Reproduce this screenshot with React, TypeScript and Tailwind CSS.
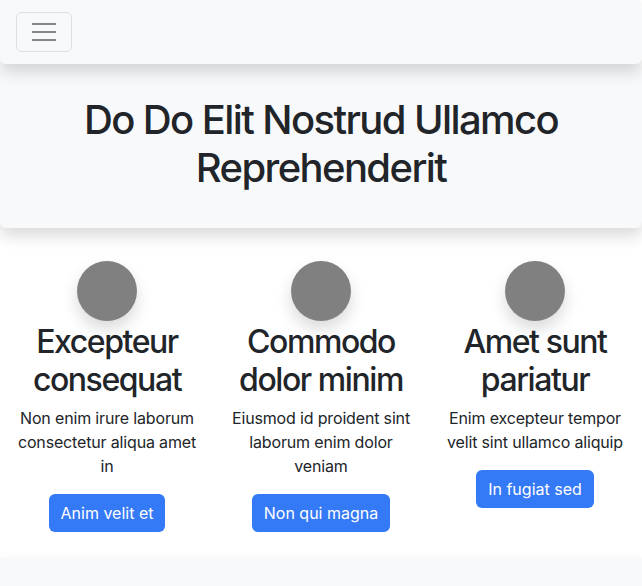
const features = [
  {
    title: 'Excepteur consequat',
    text: 'Non enim irure laborum consectetur aliqua amet in',
    action: 'Anim velit et',
  },
  {
    title: 'Commodo dolor minim',
    text: 'Eiusmod id proident sint laborum enim dolor veniam',
    action: 'Non qui magna',
  },
  {
    title: 'Amet sunt pariatur',
    text: 'Enim excepteur tempor velit sint ullamco aliquip',
    action: 'In fugiat sed',
  },
];

function Navbar() {
  return (
    <nav className="relative z-20 flex h-16 items-center rounded-md bg-[#f8f9fa] px-4 shadow-[0_8px_16px_rgba(0,0,0,0.15)]">
      <button className="flex h-10 w-14 items-center justify-center rounded-md border border-black/10">
        <span className="flex w-6 flex-col gap-[6px]">
          <span className="h-[2px] w-6 bg-[#85878a]" />
          <span className="h-[2px] w-6 bg-[#85878a]" />
          <span className="h-[2px] w-6 bg-[#85878a]" />
        </span>
      </button>
    </nav>
  );
}

export default function App() {
  return (
    <div className="min-h-[586px] bg-white text-[#212529] [font-family:Inter,'Noto_Sans',sans-serif]">
      <Navbar />

      {/* Hero */}
      <header className="relative z-10 rounded-md bg-[#f8f9fa] px-4 pt-8 pb-9 text-center shadow-[0_8px_16px_rgba(0,0,0,0.15)]">
        <h1 className="mx-auto max-w-[500px] text-[40px] leading-[48px] font-medium tracking-[-0.04em]">
          Do Do Elit Nostrud Ullamco Reprehenderit
        </h1>
      </header>

      {/* Features */}
      <section className="grid grid-cols-3 bg-white pt-[33px] pb-[26px]">
        {features.map((f) => (
          <div key={f.title} className="flex flex-col items-center px-3 text-center">
            <div className="h-[60px] w-[60px] rounded-full bg-[#808080] shadow-[0_8px_16px_rgba(0,0,0,0.15)]" />
            <h2 className="mt-0.5 mb-[7px] text-[32px] leading-[38px] font-medium tracking-[-0.045em]">
              {f.title}
            </h2>
            <p className="mb-4 text-base leading-6 tracking-[-0.01em]">{f.text}</p>
            <button className="rounded-md bg-[#3479f6] px-3 py-[7px] text-base leading-6 text-white">
              {f.action}
            </button>
          </div>
        ))}
      </section>

      <footer className="h-7 bg-[#f8f9fa] shadow-[0_0_12px_rgba(0,0,0,0.04)]" />
    </div>
  );
}
